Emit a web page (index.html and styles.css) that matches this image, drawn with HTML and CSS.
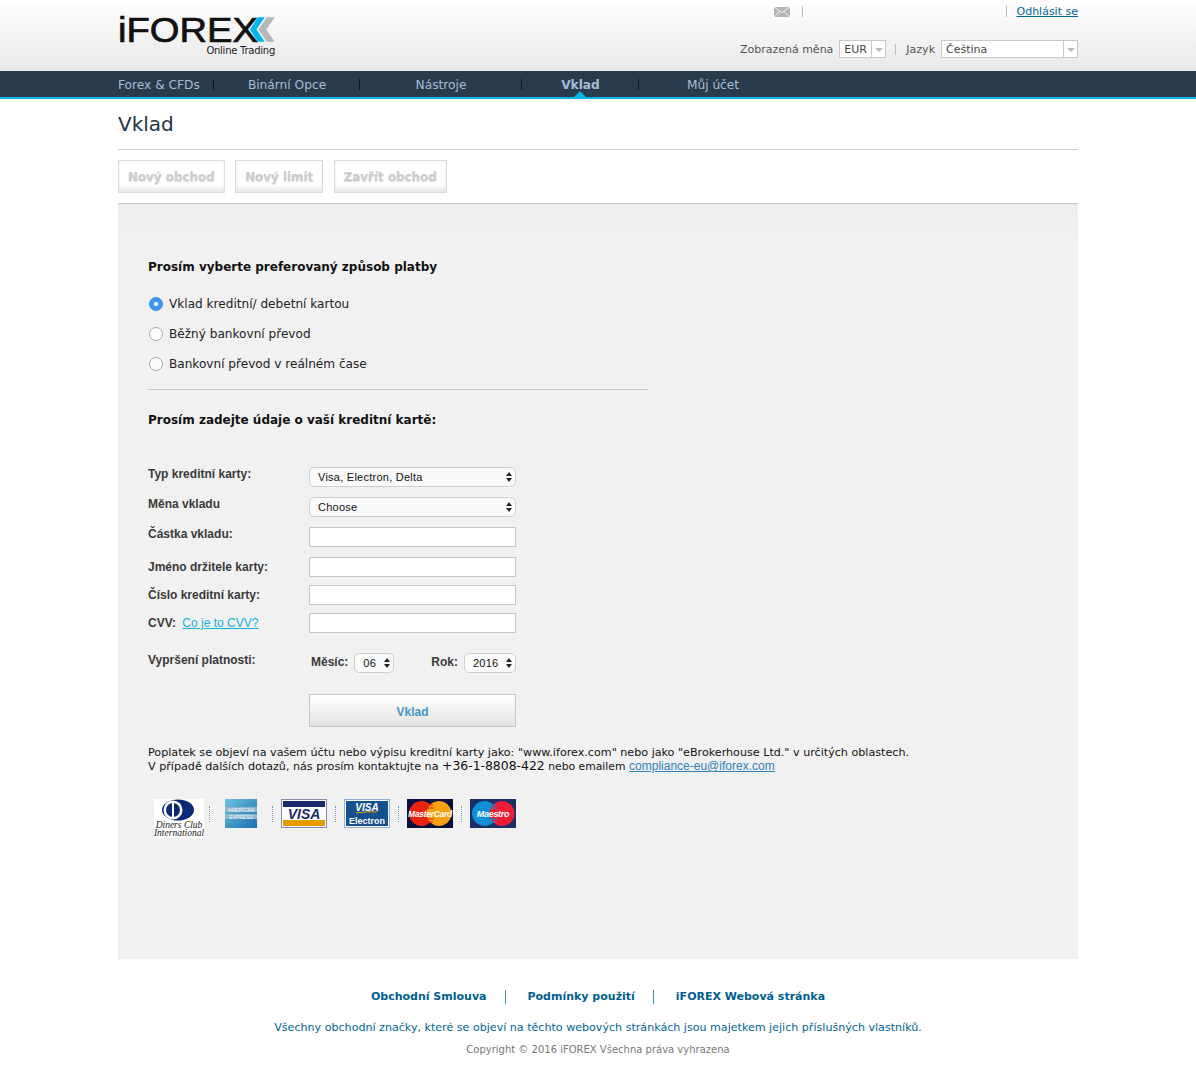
FILE: index.html
```html
<!DOCTYPE html>
<html lang="cs">
<head>
    <meta charset="UTF-8">
    <title>Vklad</title>
    <link rel="stylesheet" href="styles.css">
</head>
<body>
    <header class="top">
        <div class="wrap top-inner">
            <div class="logo">
                <div class="logo-main">
                    <span class="logo-word">iFOREX</span>
                    <svg class="logo-arrows" width="25" height="25" viewBox="0 0 25 25">
                        <polygon points="8,0 15,0 6.500,12.500 15,25 8,25 0,12.500" fill="#00b5ec"/>
                        <polygon points="17,0 25,0 16.500,12.500 25,25 17,25 8.500,12.500" fill="#b5b8ba"/>
                    </svg>
                </div>
                <div class="logo-sub">Online Trading</div>
            </div>
            <div class="top-right">
                <div class="top-links">
                    <svg class="mail" width="16" height="10" viewBox="0 0 16 10">
                        <rect width="16" height="10" fill="#b4b4b4"/>
                        <path d="M0 0 L8 5.500 L16 0 M0 10 L6 4.500 M16 10 L10 4.500" stroke="#efefef" fill="none"/>
                    </svg>
                    <span class="top-sep top-sep-wide"></span>
                    <a href="#" class="logout">Odhlásit se</a>
                </div>
                <div class="top-prefs">
                    <span>Zobrazená měna</span>
                    <div class="mini-select cur"><span class="mini-value">EUR</span><span class="mini-arrow"></span></div>
                    <span class="top-sep"></span>
                    <span>Jazyk</span>
                    <div class="mini-select lang"><span class="mini-value">Čeština</span><span class="mini-arrow"></span></div>
                </div>
            </div>
        </div>
    </header>

    <nav class="nav">
        <ul class="wrap nav-list">
            <li class="nav-a"><a href="#">Forex &amp; CFDs</a></li>
            <li class="nav-b"><a href="#">Binární Opce</a></li>
            <li class="nav-c"><a href="#">Nástroje</a></li>
            <li class="nav-d active"><a href="#">Vklad</a></li>
            <li class="nav-e"><a href="#">Můj účet</a></li>
        </ul>
    </nav>

    <main class="wrap">
        <h1 class="title">Vklad</h1>
        <div class="toolbar">
            <a href="#" class="tool-btn">Nový obchod</a>
            <a href="#" class="tool-btn">Nový limit</a>
            <a href="#" class="tool-btn">Zavřít obchod</a>
        </div>

        <section class="panel">
            <h2 class="panel-head">Prosím vyberte preferovaný způsob platby</h2>
            <div class="methods">
                <label class="method"><input type="radio" name="method" checked>Vklad kreditní/ debetní kartou</label>
                <label class="method"><input type="radio" name="method">Běžný bankovní převod</label>
                <label class="method"><input type="radio" name="method">Bankovní převod v reálném čase</label>
            </div>
            <hr class="rule">
            <h2 class="panel-head card-head">Prosím zadejte údaje o vaší kreditní kartě:</h2>

            <form class="card-form">
                <div class="row row-up">
                    <label>Typ kreditní karty:</label>
                    <div class="sel sel-full"><select><option>Visa, Electron, Delta</option></select><span class="updown"></span></div>
                </div>
                <div class="row row-up">
                    <label>Měna vkladu</label>
                    <div class="sel sel-full"><select><option>Choose</option></select><span class="updown"></span></div>
                </div>
                <div class="row row-up">
                    <label>Částka vkladu:</label>
                    <input type="text">
                </div>
                <div class="row row-tight">
                    <label>Jméno držitele karty:</label>
                    <input type="text">
                </div>
                <div class="row row-tight">
                    <label>Číslo kreditní karty:</label>
                    <input type="text">
                </div>
                <div class="row row-last">
                    <label>CVV: <a href="#" class="cvv">Co je to CVV?</a></label>
                    <input type="text">
                </div>
                <div class="row row-up row-expiry">
                    <label>Vypršení platnosti:</label>
                    <div class="expiry">
                        <span class="exp-label">Měsíc:</span>
                        <div class="sel sel-month"><select><option>06</option></select><span class="updown"></span></div>
                        <span class="exp-label exp-year">Rok:</span>
                        <div class="sel sel-year"><select><option>2016</option></select><span class="updown"></span></div>
                    </div>
                </div>
                <button type="button" class="submit">Vklad</button>
            </form>

            <p class="note">Poplatek se objeví na vašem účtu nebo výpisu kreditní karty jako: "www.iforex.com" nebo jako "eBrokerhouse Ltd." v určitých oblastech.<br>V případě dalších dotazů, nás prosím kontaktujte na <span class="phone">+36-1-8808-422</span> <span class="note-tail">nebo emailem</span> <a href="#" class="mail-link">compliance-eu@iforex.com</a></p>

            <div class="cards">
                <svg width="50" height="39" viewBox="0 0 50 39">
                    <rect width="50" height="39" fill="#fff"/>
                    <ellipse cx="24" cy="11" rx="16" ry="10.500" fill="#0a2a78"/>
                    <circle cx="19" cy="11" r="9.500" fill="#fff"/>
                    <circle cx="19" cy="11" r="7" fill="#0a2a78"/>
                    <rect x="18" y="3" width="2" height="16" fill="#fff"/>
                    <text x="25" y="29" class="diners">Diners Club</text>
                    <text x="25" y="37" class="diners">International</text>
                </svg>
                <span class="dots dots-a"></span>
                <svg width="33" height="29" viewBox="0 0 33 29">
                    <defs>
                        <linearGradient id="amex" x1="0" y1="0" x2="1" y2="1">
                            <stop offset="0" stop-color="#6cc0e0"/>
                            <stop offset="1" stop-color="#1c70ad"/>
                        </linearGradient>
                    </defs>
                    <rect width="32" height="29" fill="url(#amex)"/>
                    <rect y="8" width="32" height="5" fill="#8fb6cf"/>
                    <rect y="15" width="32" height="5" fill="#8fb6cf"/>
                    <text x="16" y="12.500" class="amex">AMERICAN</text>
                    <text x="16" y="19.500" class="amex">EXPRESS</text>
                </svg>
                <span class="dots dots-b"></span>
                <svg width="46" height="29" viewBox="0 0 46 29">
                    <rect x="0.500" y="0.500" width="45" height="28" fill="#fff" stroke="#8b8bb0"/>
                    <rect x="2" y="2" width="42" height="6" fill="#1a2a6c"/>
                    <rect x="2" y="21" width="42" height="6" fill="#e89b00"/>
                    <text x="23" y="19.500" class="visa">VISA</text>
                </svg>
                <span class="dots"></span>
                <svg width="46" height="29" viewBox="0 0 46 29">
                    <rect x="0.500" y="0.500" width="45" height="28" fill="#16508f" stroke="#8fb0d0"/>
                    <rect x="1.500" y="1.500" width="43" height="26" fill="none" stroke="#fff"/>
                    <text x="23" y="11.500" class="visa-small">VISA</text>
                    <path d="M12 14 Q24 12 33 13" stroke="#e8a800" fill="none"/>
                    <text x="23" y="25" class="electron">Electron</text>
                </svg>
                <span class="dots"></span>
                <svg width="46" height="29" viewBox="0 0 46 29">
                    <rect width="46" height="29" fill="#0b0f3f"/>
                    <circle cx="14.500" cy="14.500" r="12.500" fill="#e8230e"/>
                    <circle cx="32" cy="14.500" r="12.500" fill="#f9a010"/>
                    <path d="M21 6 H26 M20 9 H27 M20 20 H27 M21 23 H26" stroke="#e8230e"/>
                    <text x="23" y="18" class="brand">MasterCard</text>
                </svg>
                <span class="dots"></span>
                <svg width="46" height="29" viewBox="0 0 46 29">
                    <rect width="46" height="29" fill="#1c2f66"/>
                    <circle cx="14.500" cy="14.500" r="12.500" fill="#0f8fd8"/>
                    <circle cx="32" cy="14.500" r="12.500" fill="#ee1c34"/>
                    <path d="M21 6 H26 M20 9 H27 M20 20 H27 M21 23 H26" stroke="#0f8fd8"/>
                    <text x="23" y="18" class="brand brand-maestro">Maestro</text>
                </svg>
            </div>
        </section>
    </main>

    <footer class="footer">
        <div class="foot-links">
            <a href="#">Obchodní Smlouva</a>
            <a href="#">Podmínky použití</a>
            <a href="#">iFOREX Webová stránka</a>
        </div>
        <p class="trademarks">Všechny obchodní značky, které se objeví na těchto webových stránkách jsou majetkem jejich příslušných vlastníků.</p>
        <p class="copyright">Copyright © 2016 iFOREX Všechna práva vyhrazena</p>
    </footer>
</body>
</html>
```

FILE: styles.css
```css
body {
    margin: 0;
    background: #fff;
    font-family: "DejaVu Sans", Verdana, sans-serif;
    font-size: 12px;
    color: #222;
}
a {
    color: #006699;
}
.wrap {
    width: 960px;
    margin: 0 auto;
}

/* header */
.top {
    height: 71px;
    background: linear-gradient(#ffffff, #e8e8e8);
}
.top-inner {
    display: flex;
    justify-content: space-between;
}
.logo {
    width: 157px;
    padding-top: 17px;
}
.logo-main {
    display: flex;
    align-items: flex-start;
    height: 25px;
}
.logo-word {
    display: inline-block;
    font-family: "Liberation Sans", Arial, sans-serif;
    font-size: 35px;
    line-height: 25px;
    color: #111;
    -webkit-text-stroke: 0.7px #111;
    transform: scaleX(1.09);
    transform-origin: left;
}
.logo-arrows {
    display: block;
    margin-left: 4px;
}
.logo-sub {
    font-size: 10px;
    line-height: 13px;
    margin-top: 2px;
    text-align: right;
    color: #222;
    letter-spacing: -0.25px;
}
.top-right {
    display: flex;
    flex-direction: column;
    align-items: flex-end;
}
.top-links {
    display: flex;
    align-items: center;
    height: 23px;
}
.top-sep {
    display: block;
    width: 1px;
    height: 11px;
    background: #bbb;
}
.top-sep-wide {
    margin: 0 9.500px 0 12px;
    width: 205px;
    background: linear-gradient(to right, #bbb 1px, transparent 1px, transparent 204px, #bbb 204px);
}
.logout {
    font-size: 11px;
}
.mail {
    display: block;
}
.top-prefs {
    display: flex;
    align-items: center;
    gap: 6px;
    margin-top: 17px;
    height: 18px;
    font-size: 11px;
    color: #555;
}
.top-prefs .top-sep {
    margin: 0 4px 0 3px;
}
.mini-select {
    display: flex;
    height: 18px;
    box-sizing: border-box;
    border: 1px solid #c8c8c8;
    background: #fff;
    color: #444;
}
.mini-value {
    flex: 1;
    padding-left: 4px;
    line-height: 17px;
}
.mini-arrow {
    position: relative;
    width: 13px;
    border-left: 1px solid #c8c8c8;
}
.mini-arrow::after {
    content: "";
    position: absolute;
    left: 3px;
    top: 7px;
    border: 4px solid transparent;
    border-top-color: #bbb;
    border-bottom: 0;
}
.cur {
    width: 47px;
}
.lang {
    width: 137px;
}

/* nav */
.nav {
    height: 26px;
    background: #2b3b4e;
    border-bottom: 2px solid #00b4e6;
}
.nav-list {
    display: flex;
    list-style: none;
    padding: 0;
    height: 26px;
}
.nav-list li {
    position: relative;
    text-align: center;
    line-height: 28px;
}
.nav-list li::after {
    content: "";
    position: absolute;
    right: 0;
    top: 8px;
    width: 1px;
    height: 11px;
    background: #0d1722;
}
.nav-list a {
    color: #a5bdd3;
    font-size: 12.200px;
    text-decoration: none;
}
.nav-a {
    width: 96px;
    text-align: left !important;
}
.nav-b {
    width: 146px;
}
.nav-c {
    width: 162px;
}
.nav-d {
    width: 117px;
}
.nav-e {
    width: 148px;
}
.nav-e::after {
    display: none;
}
.nav-list .active a {
    font-weight: bold;
}
.nav-list .active::before {
    content: "";
    position: absolute;
    left: 52px;
    bottom: 0;
    border: 6px solid transparent;
    border-bottom-color: #00b4e6;
    border-top: 0;
}

/* page head */
.title {
    margin: 0;
    height: 50px;
    line-height: 50px;
    font-size: 20px;
    font-weight: normal;
    color: #1f3347;
    border-bottom: 1px solid #c8c8c8;
}
.toolbar {
    display: flex;
    gap: 10.500px;
    height: 54px;
    padding-top: 10px;
    box-sizing: border-box;
    border-bottom: 1px solid #c8c8c8;
}
.tool-btn {
    height: 33px;
    box-sizing: border-box;
    padding: 0 9px;
    line-height: 32px;
    font-size: 11.900px;
    font-weight: bold;
    color: #cdcdcd;
    text-decoration: none;
    border: 1px solid #dcdcdc;
    background: #fff;
    box-shadow: inset 0 -7px 6px -4px #e2e2e2, inset 0 0 3px #f0f0f0;
    text-shadow: 0 1px 1px #d8d8d8;
}

/* panel */
.panel {
    height: 755px;
    box-sizing: border-box;
    padding: 55px 30px 0;
    background: linear-gradient(#eeeeee, #f1f1f1 50px);
}
.panel-head {
    margin: 0;
    font-size: 12px;
    line-height: 16px;
    font-weight: bold;
    color: #111;
}
.methods {
    margin-top: 14px;
}
.method {
    display: flex;
    align-items: center;
    height: 30px;
    font-size: 12.100px;
    color: #222;
}
.method input {
    appearance: none;
    width: 14px;
    height: 14px;
    margin: 0 6px 0 1px;
    border: 1px solid #aaa;
    border-radius: 50%;
    background: #fbfbfb;
}
.method input:checked {
    border-color: #3a90f0;
    background: radial-gradient(circle, #fff 0 1.500px, #3d95f5 2.500px);
}
.rule {
    width: 500px;
    margin: 10px 0 0;
    border: 0;
    border-top: 1px solid #c8c8c8;
}
.card-head {
    margin-top: 22px;
}

/* form */
.card-form {
    margin-top: 39px;
    width: 368px;
    font-family: "Liberation Sans", Arial, sans-serif;
}
.row {
    display: flex;
    align-items: flex-start;
    justify-content: space-between;
}
.row label {
    font-size: 12px;
    font-weight: bold;
    color: #3a3a3a;
}
.row-up {
    height: 30px;
}
.row-up label {
    line-height: 14px;
}
.row-tight {
    height: 28px;
}
.row-tight label,
.row-last label {
    line-height: 20px;
}
.row-last {
    height: 40px;
}
.row-expiry {
    height: 41px;
}
.row input {
    width: 207px;
    height: 20px;
    box-sizing: border-box;
    border: 1px solid #c8c8c8;
    background: #fff;
}
.cvv {
    margin-left: 3px;
    font-weight: normal;
    color: #13b1dc;
}
.sel {
    position: relative;
    height: 20px;
}
.sel select {
    appearance: none;
    display: block;
    width: 100%;
    height: 20px;
    padding: 0 0 0 8px;
    border: 1px solid #cfcfcf;
    border-radius: 5px;
    background: #fafafa;
    font-family: "Liberation Sans", Arial, sans-serif;
    font-size: 11px;
    letter-spacing: 0.25px;
    color: #111;
}
.updown {
    position: absolute;
    right: 4px;
    top: 5px;
    width: 6px;
    height: 10px;
}
.updown::before,
.updown::after {
    content: "";
    position: absolute;
    left: 0;
    border: 3px solid transparent;
}
.updown::before {
    top: 0;
    border-top: 0;
    border-bottom: 4px solid #222;
}
.updown::after {
    bottom: 0;
    border-bottom: 0;
    border-top: 4px solid #222;
}
.sel-full {
    width: 207px;
}
.sel-month {
    width: 40px;
}
.sel-year {
    width: 52px;
}
.expiry {
    display: flex;
    align-items: flex-start;
    width: 205px;
    gap: 6px;
}
.exp-label {
    font-size: 12px;
    font-weight: bold;
    line-height: 18px;
    color: #3a3a3a;
}
.exp-year {
    margin-left: auto;
}
.submit {
    display: block;
    width: 207px;
    height: 33px;
    margin-left: 161px;
    padding-top: 3px;
    border: 1px solid #c8c8c8;
    background: linear-gradient(#ffffff, #e2e2e2);
    font-family: "Liberation Sans", Arial, sans-serif;
    font-size: 12px;
    font-weight: bold;
    color: #4496c6;
}
.note {
    margin: 19px 0 0;
    font-size: 11.150px;
    line-height: 14px;
    color: #111;
}
.phone {
    font-size: 12.400px;
    line-height: 1;
}
.note-tail {
    font-size: 10.800px;
}
.mail-link {
    font-family: "Liberation Sans", Arial, sans-serif;
    font-size: 12px;
    line-height: 1;
    color: #2f7fb8;
}
.cards {
    display: flex;
    align-items: flex-start;
    margin: 25px 0 0 6px;
}
.dots {
    width: 0;
    height: 16px;
    margin: 7px 8px 0 8px;
    border-left: 1px dotted #7a9cc0;
}
.dots-a {
    margin: 7px 15px 0 5px;
}
.dots-b {
    margin: 7px 8px 0 14px;
}
.diners {
    font-family: "Liberation Serif", serif;
    font-style: italic;
    font-size: 9.500px;
    text-anchor: middle;
    fill: #222;
}
.amex {
    font-family: "Liberation Sans", sans-serif;
    font-size: 5px;
    text-anchor: middle;
    fill: #eef6fb;
}
.visa {
    font-family: "Liberation Sans", sans-serif;
    font-weight: bold;
    font-style: italic;
    font-size: 14px;
    text-anchor: middle;
    fill: #1a2a6c;
}
.visa-small {
    font-family: "Liberation Sans", sans-serif;
    font-weight: bold;
    font-style: italic;
    font-size: 10px;
    text-anchor: middle;
    fill: #fff;
}
.electron {
    font-family: "Liberation Sans", sans-serif;
    font-weight: bold;
    font-size: 9px;
    text-anchor: middle;
    fill: #fff;
}
.brand {
    font-family: "Liberation Sans", sans-serif;
    font-weight: bold;
    font-style: italic;
    font-size: 8.500px;
    letter-spacing: -0.3px;
    text-anchor: middle;
    fill: #fff;
}
.brand-maestro {
    font-size: 9px;
}

/* footer */
.footer {
    padding-top: 31px;
    text-align: center;
}
.foot-links {
    display: flex;
    justify-content: center;
    height: 14px;
    font-size: 11px;
    line-height: 14px;
    font-weight: bold;
}
.foot-links a {
    padding: 0 18px 0 22px;
    color: #006090;
    text-decoration: none;
    border-left: 1px solid #3b8fc0;
}
.foot-links a:first-child {
    padding-left: 0;
    border-left: 0;
}
.foot-links a:last-child {
    padding-right: 0;
}
.trademarks {
    margin: 17px 0 0;
    font-size: 11.100px;
    line-height: 14px;
    color: #00659a;
}
.copyright {
    margin: 8px 0 0;
    font-size: 10px;
    line-height: 14px;
    color: #777;
}
```
